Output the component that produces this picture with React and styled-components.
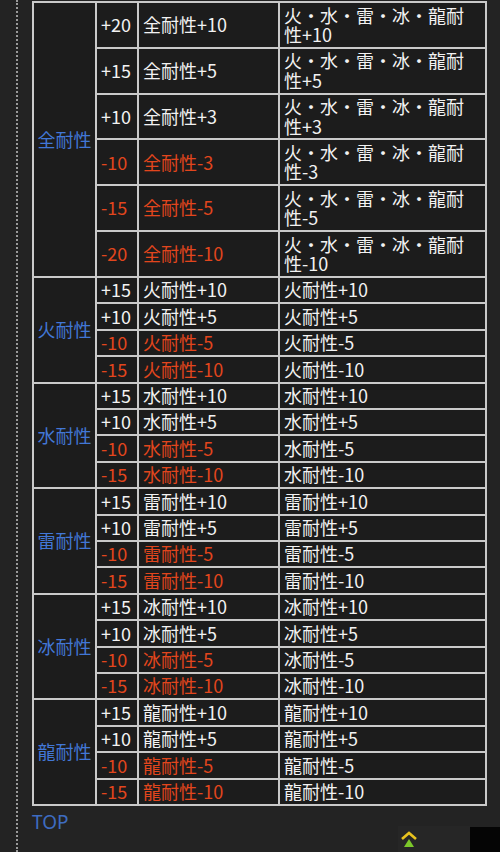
import React from "react";
import styled, { createGlobalStyle } from "styled-components";

const Global = createGlobalStyle`
  html, body { margin: 0; padding: 0; background: #232323; }
  body { width: 500px; height: 852px; overflow: hidden; font-family: "Noto Sans CJK JP", "Noto Sans", sans-serif; }
`;

const Page = styled.div`
  position: relative;
  width: 500px;
  height: 852px;
  padding-left: 16px;
  box-sizing: border-box;
  background: #232323;
`;

const Rail = styled.div`
  border-left: 2px dotted #9a9a9a;
  padding: 1px 0 0 14px;
  height: 100%;
  box-sizing: border-box;
`;

const Table = styled.table`
  border-collapse: collapse;
  table-layout: fixed;
  width: 453px;
  background: #1c1c1c;
  font-size: 18px;
  line-height: 19.4px;
`;

const Cell = styled.td`
  border: 2px solid #c9c9c9;
  padding: 2.5px 4px;
  vertical-align: middle;
  color: ${(p) => (p.$neg ? "#e2461d" : "#f2f2f2")};
  white-space: ${(p) => (p.$wrap ? "normal" : "nowrap")};
  ${(p) => p.$wrap && "padding-right: 12px;"}
`;

const Label = styled.td`
  border: 2px solid #c9c9c9;
  padding: 0;
  text-align: center;
  vertical-align: middle;
  color: #4277d6;
  white-space: nowrap;
`;

const TopLink = styled.div`
  margin-top: 4px;
  color: #3e6cc0;
  font-family: "Noto Sans", sans-serif;
  font-size: 19px;
  line-height: 24px;
`;

const BackTop = styled.div`
  position: absolute;
  left: 398px;
  top: 826px;
  width: 72px;
  height: 26px;
  background: #262626;
`;

const Corner = styled.div`
  position: absolute;
  left: 470px;
  top: 827px;
  width: 30px;
  height: 25px;
  background: #050505;
`;

const groups = [
  {
    name: "全耐性",
    rows: [
      ["+20", "全耐性+10", "火・水・雷・冰・龍耐性+10"],
      ["+15", "全耐性+5", "火・水・雷・冰・龍耐性+5"],
      ["+10", "全耐性+3", "火・水・雷・冰・龍耐性+3"],
      ["-10", "全耐性-3", "火・水・雷・冰・龍耐性-3"],
      ["-15", "全耐性-5", "火・水・雷・冰・龍耐性-5"],
      ["-20", "全耐性-10", "火・水・雷・冰・龍耐性-10"],
    ],
    wrap: true,
  },
  ...["火", "水", "雷", "冰", "龍"].map((e) => ({
    name: `${e}耐性`,
    rows: [
      ["+15", `${e}耐性+10`, `${e}耐性+10`],
      ["+10", `${e}耐性+5`, `${e}耐性+5`],
      ["-10", `${e}耐性-5`, `${e}耐性-5`],
      ["-15", `${e}耐性-10`, `${e}耐性-10`],
    ],
    wrap: false,
  })),
];

function Chevron() {
  return (
    <svg width="18" height="18" viewBox="0 0 18 18" style={{ position: "absolute", left: 2, top: 3 }}>
      <path d="M2 10 L9 4 L16 10" fill="none" stroke="#e8c21e" strokeWidth="2.6" />
      <path d="M4 18 L9 10 L14 18 Z" fill="#7cc82a" />
    </svg>
  );
}

export default function App() {
  return (
    <Page>
      <Global />
      <Rail>
        <Table>
          <colgroup>
            <col style={{ width: 63 }} />
            <col style={{ width: 42 }} />
            <col style={{ width: 141 }} />
            <col style={{ width: 207 }} />
          </colgroup>
          <tbody>
            {groups.map((g) =>
              g.rows.map((r, i) => {
                const neg = r[0].startsWith("-");
                return (
                  <tr key={g.name + i}>
                    {i === 0 && <Label rowSpan={g.rows.length}>{g.name}</Label>}
                    <Cell $neg={neg}>{r[0]}</Cell>
                    <Cell $neg={neg}>{r[1]}</Cell>
                    <Cell $wrap={g.wrap}>{r[2]}</Cell>
                  </tr>
                );
              })
            )}
          </tbody>
        </Table>
        <TopLink>TOP</TopLink>
      </Rail>
      <BackTop>
        <Chevron />
      </BackTop>
      <Corner />
    </Page>
  );
}
